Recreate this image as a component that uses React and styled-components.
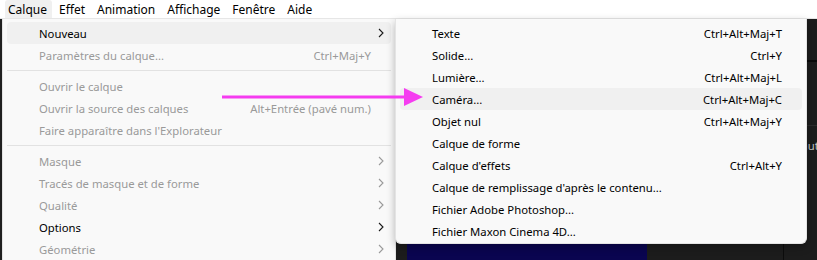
import React from 'react'
import styled, { createGlobalStyle } from 'styled-components'

const GlobalStyle = createGlobalStyle`
    html, body {
        margin: 0;
        padding: 0;
        background: #1c1c1c;
    }
    body {
        font-family: "Noto Sans", "Liberation Sans", sans-serif;
        font-size: 11.3px;
    }
`;

const Page = styled.div`
    position: relative;
    width: 817px;
    height: 260px;
    overflow: hidden;
    display: flex;
    flex-direction: column;
`;

const MenuBar = styled.div`
    height: 18px;
    background: #ffffff;
    border-bottom: 1px solid #e6e6e6;
    display: flex;
    align-items: stretch;
    padding-left: 5px;
    gap: 4px;
    font-size: 12px;
`;

const BarItem = styled.div`
    display: flex;
    align-items: center;
    padding: 0 5px 0 3px;
    color: #000000;
    background: ${p => (p.active ? '#f0f0f0' : 'transparent')};
    border-radius: 3px 3px 0 0;
`;

const Workspace = styled.div`
    position: relative;
    flex: 1;
    display: flex;
    background: #1c1c1c;
`;

const LeftEdge = styled.div`
    width: 2px;
    background: #202020;
`;

const Viewer = styled.div`
    flex: 1;
    display: flex;
    align-items: flex-end;
    padding-left: 405px;
`;

const CompFrame = styled.div`
    width: 240px;
    height: 17px;
    background: #0a0550;
`;

const SidePanel = styled.div`
    width: 33px;
    border-left: 1px solid #0c0c0c;
    display: flex;
    flex-direction: column;
`;

const PanelHeader = styled.div`
    height: 41px;
    border-bottom: 2px solid #0a0a0a;
`;

const PanelSection = styled.div`
    height: 63px;
    border-bottom: 1px solid #2c2c2c;
`;

const PanelText = styled.div`
    padding: 12px 0 0 9px;
    color: #c4c4c4;
    white-space: nowrap;
`;

const Menu = styled.div`
    position: absolute;
    top: 0;
    left: ${p => p.left}px;
    width: ${p => p.width}px;
    ${p => (p.height ? `height: ${p.height}px;` : 'bottom: -20px;')}
    box-sizing: border-box;
    background: #f9f9f9;
    border: 1px solid #e4e4e4;
    border-top: none;
    border-radius: 0 0 6px 6px;
    box-shadow: ${p => (p.sub ? '0 3px 8px rgba(0, 0, 0, 0.28)' : 'none')};
    padding: 3px 4px;
    display: flex;
    flex-direction: column;
`;

const Row = styled.div`
    height: 22px;
    flex-shrink: 0;
    display: grid;
    grid-template-columns: 1fr auto 20px;
    align-items: center;
    padding-left: 32px;
    border-radius: 4px;
    background: ${p => (p.hover ? '#f0f0f0' : 'transparent')};
    color: ${p => (p.disabled ? '#9a9a9a' : '#000000')};
    white-space: nowrap;
`;

const Shortcut = styled.span`
    text-align: right;
`;

const Separator = styled.div`
    height: 9px;
    flex-shrink: 0;
    display: flex;
    align-items: center;

    &::after {
        content: '';
        flex: 1;
        height: 1px;
        background: #e2e2e2;
    }
`;

const ChevronBox = styled.span`
    display: flex;
    justify-content: center;
    align-items: center;
`;

const Arrow = styled.svg`
    position: absolute;
    left: 220px;
    top: 86px;
`;

const Chevron = ({ disabled }) => (
    <ChevronBox>
        <svg width="6" height="10" viewBox="0 0 6 10">
            <polyline points="1,1 5,5 1,9" fill="none" stroke={disabled ? '#9a9a9a' : '#1a1a1a'} strokeWidth="1.1" />
        </svg>
    </ChevronBox>
);

const mainItems = [
    { label: 'Nouveau', sub: true, hover: true },
    { label: 'Paramètres du calque...', shortcut: 'Ctrl+Maj+Y', disabled: true },
    'sep',
    { label: 'Ouvrir le calque', disabled: true },
    { label: 'Ouvrir la source des calques', shortcut: 'Alt+Entrée (pavé num.)', disabled: true },
    { label: "Faire apparaître dans l'Explorateur", disabled: true },
    'sep',
    { label: 'Masque', sub: true, disabled: true },
    { label: 'Tracés de masque et de forme', sub: true, disabled: true },
    { label: 'Qualité', sub: true, disabled: true },
    { label: 'Options', sub: true },
    { label: 'Géométrie', sub: true, disabled: true },
];

const newItems = [
    { label: 'Texte', shortcut: 'Ctrl+Alt+Maj+T' },
    { label: 'Solide...', shortcut: 'Ctrl+Y' },
    { label: 'Lumière...', shortcut: 'Ctrl+Alt+Maj+L' },
    { label: 'Caméra...', shortcut: 'Ctrl+Alt+Maj+C', hover: true },
    { label: 'Objet nul', shortcut: 'Ctrl+Alt+Maj+Y' },
    { label: 'Calque de forme' },
    { label: "Calque d'effets", shortcut: 'Ctrl+Alt+Y' },
    { label: "Calque de remplissage d'après le contenu..." },
    { label: 'Fichier Adobe Photoshop...' },
    { label: 'Fichier Maxon Cinema 4D...' },
];

const renderItems = (items) =>
    items.map((item, i) =>
        item === 'sep' ? (
            <Separator key={i} />
        ) : (
            <Row key={i} hover={item.hover} disabled={item.disabled}>
                <span>{item.label}</span>
                <Shortcut>{item.shortcut}</Shortcut>
                {item.sub ? <Chevron disabled={item.disabled} /> : <span />}
            </Row>
        )
    );

const App = () => {
    return (
        <Page>
            <GlobalStyle />
            <MenuBar>
                <BarItem active>Calque</BarItem>
                <BarItem>Effet</BarItem>
                <BarItem>Animation</BarItem>
                <BarItem>Affichage</BarItem>
                <BarItem>Fenêtre</BarItem>
                <BarItem>Aide</BarItem>
            </MenuBar>
            <Workspace>
                <LeftEdge />
                <Viewer>
                    <CompFrame />
                </Viewer>
                <SidePanel>
                    <PanelHeader />
                    <PanelSection />
                    <PanelText>Haut</PanelText>
                </SidePanel>

                <Menu left={2} width={394}>
                    {renderItems(mainItems)}
                </Menu>
                <Menu sub left={395} width={412} height={225}>
                    {renderItems(newItems)}
                </Menu>
            </Workspace>
            <Arrow width="206" height="22" viewBox="0 0 206 22">
                <line x1="2" y1="11" x2="190" y2="11" stroke="#f53cf0" strokeWidth="3" />
                <polygon points="184,2 203,11 184,20" fill="#f53cf0" />
            </Arrow>
        </Page>
    )
}

export default App;
